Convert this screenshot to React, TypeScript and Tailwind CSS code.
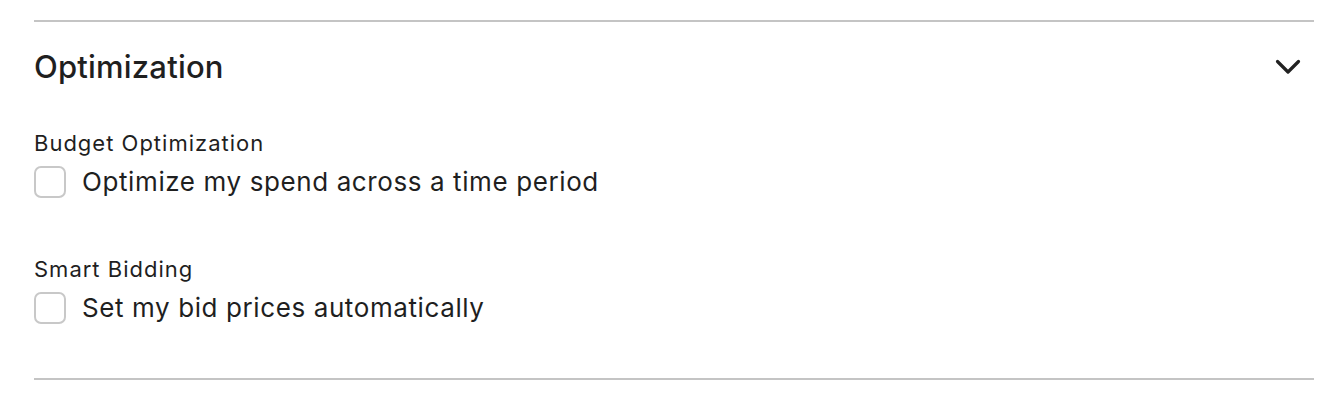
import { useState } from "react";

type Option = {
  id: string;
  label: string;
  text: string;
};

const options: Option[] = [
  {
    id: "budget",
    label: "Budget Optimization",
    text: "Optimize my spend across a time period",
  },
  {
    id: "bidding",
    label: "Smart Bidding",
    text: "Set my bid prices automatically",
  },
];

function Chevron() {
  return (
    <svg width="26" height="16" viewBox="0 0 26 16" fill="none">
      <path
        d="M2.5 2.5 L13 13 L23.5 2.5"
        stroke="#222222"
        strokeWidth="3.2"
        strokeLinecap="round"
        strokeLinejoin="round"
      />
    </svg>
  );
}

export default function App() {
  const [checked, setChecked] = useState<Record<string, boolean>>({});

  return (
    <div className="w-full bg-white pl-[34px] pr-[20px] pt-5 font-['Inter','Liberation_Sans',sans-serif] text-[#1f1f1f]">
      <div className="border-t-2 border-b-2 border-[#c4c4c4]">
        <div className="flex items-center justify-between pt-[26px] pb-[43px]">
          <h2 className="text-[31px] font-medium leading-[38px] tracking-[0.2px]">
            Optimization
          </h2>
          <button className="mr-[10px] flex h-8 w-8 items-center justify-center">
            <Chevron />
          </button>
        </div>

        <div className="flex flex-col gap-[56px] pb-[53px]">
          {options.map((opt) => (
            <div key={opt.id} className="flex flex-col">
              <div className="text-[22px] leading-[28px] tracking-[1px]">
                {opt.label}
              </div>
              <label className="mt-[8px] flex cursor-pointer items-center gap-4">
                <input
                  type="checkbox"
                  className="peer sr-only"
                  checked={!!checked[opt.id]}
                  onChange={() =>
                    setChecked((c) => ({ ...c, [opt.id]: !c[opt.id] }))
                  }
                />
                <span className="h-[32px] w-[32px] rounded-[7px] border-2 border-[#c8c8c8] bg-white peer-checked:bg-[#222]" />
                <span className="text-[26px] leading-[34px] tracking-[0.6px]">
                  {opt.text}
                </span>
              </label>
            </div>
          ))}
        </div>
      </div>
    </div>
  );
}
